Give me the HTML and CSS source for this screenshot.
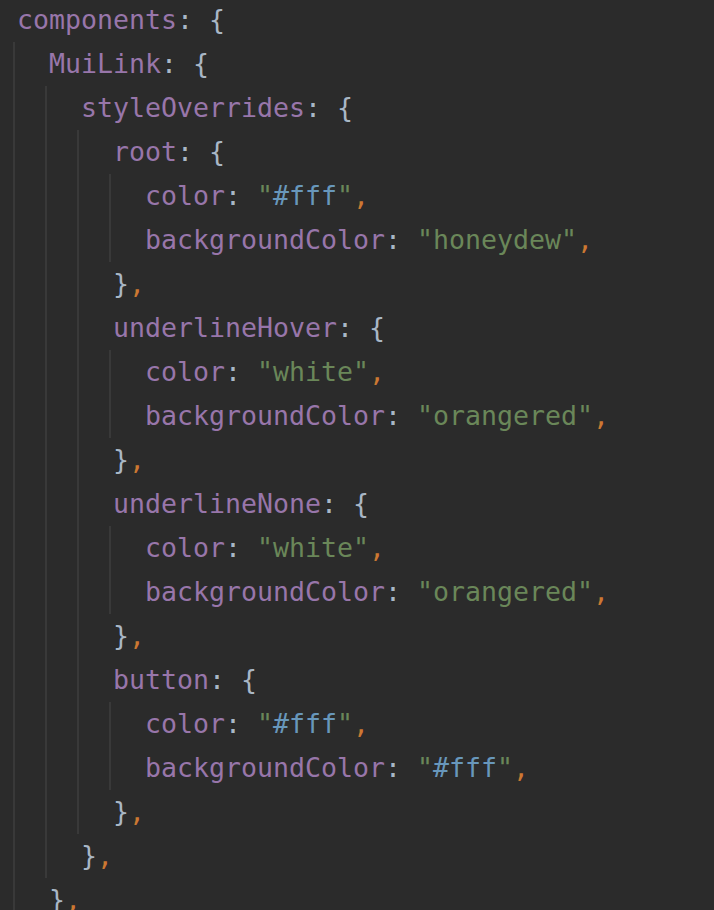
FILE: index.html
```html
<!DOCTYPE html>
<html>
<head>
<meta charset="utf-8">
<link rel="stylesheet" href="styles.css">
</head>
<body>
<div class="code">
  <div class="line"><span class="k">components</span><span class="p">: {</span></div>
  <div class="block">
    <div class="line"><span class="k">MuiLink</span><span class="p">: {</span></div>
    <div class="block">
      <div class="line"><span class="k">styleOverrides</span><span class="p">: {</span></div>
      <div class="block">
        <div class="line"><span class="k">root</span><span class="p">: {</span></div>
        <div class="block">
          <div class="line"><span class="k">color</span><span class="p">: </span><span class="s">"</span><span class="n">#fff</span><span class="s">"</span><span class="c">,</span></div>
          <div class="line"><span class="k">backgroundColor</span><span class="p">: </span><span class="s">"honeydew"</span><span class="c">,</span></div>
        </div>
        <div class="line"><span class="p">}</span><span class="c">,</span></div>
        <div class="line"><span class="k">underlineHover</span><span class="p">: {</span></div>
        <div class="block">
          <div class="line"><span class="k">color</span><span class="p">: </span><span class="s">"white"</span><span class="c">,</span></div>
          <div class="line"><span class="k">backgroundColor</span><span class="p">: </span><span class="s">"orangered"</span><span class="c">,</span></div>
        </div>
        <div class="line"><span class="p">}</span><span class="c">,</span></div>
        <div class="line"><span class="k">underlineNone</span><span class="p">: {</span></div>
        <div class="block">
          <div class="line"><span class="k">color</span><span class="p">: </span><span class="s">"white"</span><span class="c">,</span></div>
          <div class="line"><span class="k">backgroundColor</span><span class="p">: </span><span class="s">"orangered"</span><span class="c">,</span></div>
        </div>
        <div class="line"><span class="p">}</span><span class="c">,</span></div>
        <div class="line"><span class="k">button</span><span class="p">: {</span></div>
        <div class="block">
          <div class="line"><span class="k">color</span><span class="p">: </span><span class="s">"</span><span class="n">#fff</span><span class="s">"</span><span class="c">,</span></div>
          <div class="line"><span class="k">backgroundColor</span><span class="p">: </span><span class="s">"</span><span class="n">#fff</span><span class="s">"</span><span class="c">,</span></div>
        </div>
        <div class="line"><span class="p">}</span><span class="c">,</span></div>
      </div>
      <div class="line"><span class="p">}</span><span class="c">,</span></div>
    </div>
    <div class="line"><span class="p">}</span><span class="c">,</span></div>
    <div class="line"><span class="p">&nbsp;</span></div>
  </div>
</div>
</body>
</html>
```
FILE: styles.css
```css
html, body {
  margin: 0;
  padding: 0;
  background: #2b2b2b;
  overflow: hidden;
  height: 910px;
}
.code {
  margin-top: -2px;
  padding-left: 17px;
  font-family: "DejaVu Sans Mono", monospace;
  font-size: 26.58px;
  color: #a9b7c6;
}
.line {
  height: 44px;
  line-height: 44px;
  white-space: pre;
}
.block {
  margin-left: -4px;
  border-left: 2px solid #393939;
  padding-left: 34px;
}
.k { color: #9876aa; }
.p { color: #a9b7c6; }
.s { color: #6a8759; }
.n { color: #6897bb; }
.c { color: #cc7832; }
```
